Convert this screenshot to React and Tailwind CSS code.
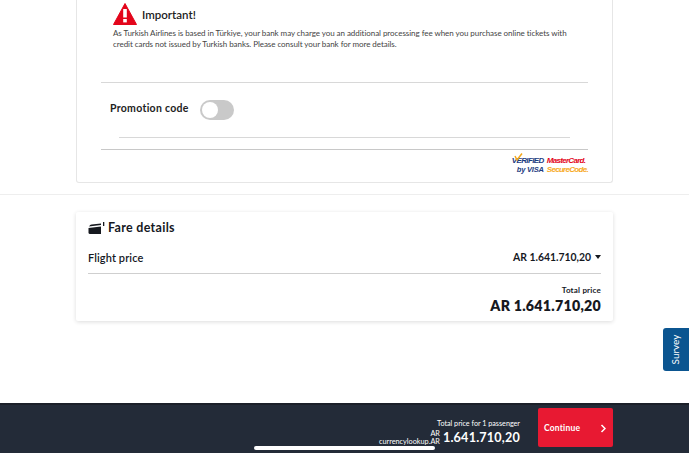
function WarningIcon() {
  return (
    <svg width="24" height="22" viewBox="0 0 24 22">
      <path d="M12 0.5 L23.5 21.5 L0.5 21.5 Z" fill="#e3051b" stroke="#e3051b" strokeLinejoin="round" />
      <rect x="10.2" y="6" width="3.6" height="8.5" fill="#fff" />
      <rect x="10.2" y="16" width="3.6" height="3.4" fill="#fff" />
    </svg>
  );
}

function CardIcon() {
  return (
    <svg width="17" height="13" viewBox="0 0 17 13">
      <path d="M1.5 4 Q1.5 2.6 3.5 2.4 L13 1.5 L13 3 L0.8 4.6 Z" fill="#16191f" />
      <path d="M0.5 6 L13 4.4 L13 12 L2 12 Q0.5 12 0.5 10.5 Z" fill="#16191f" />
      <rect x="15" y="0" width="1.3" height="4" fill="#16191f" />
    </svg>
  );
}

function SecureLogos() {
  return (
    <div className="flex items-center justify-end gap-[3px] h-[20px] font-['Liberation_Sans',sans-serif] italic font-bold">
      <div className="relative flex flex-col items-end leading-[9px] text-[#1d3c7f]">
        <svg className="absolute left-[2px] top-[-3px]" width="9" height="8" viewBox="0 0 9 8">
          <path d="M1 3 L3 7 L8 0.5" fill="none" stroke="#f4a81d" strokeWidth="1.5" />
        </svg>
        <span className="text-[8px] tracking-[-0.6px]">VERIFIED</span>
        <span className="text-[7.5px] tracking-[-0.2px]">by VISA</span>
      </div>
      <div className="flex flex-col leading-[9px] text-[8px] tracking-[-0.7px]">
        <span className="text-[#e3051b]">MasterCard.</span>
        <span className="text-[#f7a81b]">SecureCode.</span>
      </div>
    </div>
  );
}

export default function App() {
  return (
    <div className="relative flex flex-col h-[453px] overflow-hidden bg-white text-[#16191f] font-['Lato',sans-serif]">
      {/* Payment card */}
      <div className="border-b border-[#eeeeee] pb-[11px]">
        <div className="ml-[76px] w-[537px] h-[183px] border border-t-0 border-[#e6e6e6] rounded-b-[3px] px-[24px] flex flex-col">
          <div className="ml-[12px] pt-[3px]">
            <div className="flex items-center gap-[5px]">
              <WarningIcon />
              <span className="mt-[2px] text-[11.5px] font-semibold text-[#222]">Important!</span>
            </div>
            <p className="mt-[3px] text-[8px] tracking-[-0.05px] leading-[11px] text-[#444] whitespace-nowrap">
              As Turkish Airlines is based in Türkiye, your bank may charge you an additional processing fee when you purchase online tickets with
              <br />
              credit cards not issued by Turkish banks. Please consult your bank for more details.
            </p>
          </div>
          <div className="mt-[32px] border-t border-[#d8d8d8]" />
          <div className="mt-[17px] ml-[9px] flex items-center h-[20px]">
            <span className="mb-[2px] text-[10.5px] font-bold tracking-[0.3px] w-[90px] text-[#222]">Promotion code</span>
            <span className="flex items-center w-[34px] h-[20px] rounded-full bg-[#c9c9c9] pl-[2px]">
              <span className="w-[16px] h-[16px] rounded-full bg-white" />
            </span>
          </div>
          <div className="mt-[17px] mx-[18px] border-t border-[#d8d8d8]" />
          <div className="mt-[11px] border-t border-[#c8c8c8]" />
          <div className="mt-[5px]">
            <SecureLogos />
          </div>
        </div>
      </div>

      {/* Fare details */}
      <div className="mt-[17px] ml-[76px] w-[537px] h-[109px] rounded-[2px] bg-white shadow-[0_1px_4px_rgba(0,0,0,0.14)] px-[12px]">
        <div className="flex items-center gap-[3px] pt-[3px] h-[30px]">
          <CardIcon />
          <span className="text-[12.5px] font-bold tracking-[0.3px]">Fare details</span>
        </div>
        <div className="flex items-center justify-between h-[32px] border-b border-[#cfcfcf] pt-[1px]">
          <span className="text-[11px] font-semibold tracking-[0.1px]">Flight price</span>
          <span className="flex items-center gap-[4px] text-[10.4px] font-bold">
            AR 1.641.710,20
            <span className="mb-[2px] w-0 h-0 border-x-[3.5px] border-x-transparent border-t-[4px] border-t-[#16191f]" />
          </span>
        </div>
        <div className="flex flex-col items-end pt-[11px]">
          <span className="text-[8px] leading-[11px] font-bold tracking-[0.2px]">Total price</span>
          <span className="text-[14.2px] leading-[19px] font-extrabold tracking-[0.25px]">AR 1.641.710,20</span>
        </div>
      </div>

      {/* Footer */}
      <div className="relative mt-auto h-[50px] bg-[#232b38] border-t-[2px] border-[#1b2029] flex items-start justify-end pr-[76px] pt-[3px]">
        <div className="flex flex-col items-end text-white mr-[18px] mt-[11px]">
          <span className="text-[7.2px] leading-[10px]">Total price for 1 passenger</span>
          <div className="flex items-center gap-[3px]">
            <span className="text-[7.3px] leading-[8px] text-right">AR<br />currencylookup.AR</span>
            <span className="text-[12.6px] leading-[17px] font-bold tracking-[0.2px]">1.641.710,20</span>
          </div>
        </div>
        <button className="w-[75px] h-[39px] rounded-[2px] bg-[#e81932] text-white flex items-center justify-between pl-[6px] pr-[7px] pt-[1px] text-[8.5px] font-bold tracking-[0.2px]">
          Continue
          <svg width="6" height="9" viewBox="0 0 6 9">
            <path d="M1.5 1 L5 4.5 L1.5 8" fill="none" stroke="#fff" strokeWidth="1.5" />
          </svg>
        </button>
        <span className="absolute left-[254px] top-[41px] w-[181px] h-[4px] rounded-full bg-white" />
      </div>

      {/* Survey tab */}
      <div className="absolute left-[663px] top-[328px] w-[26px] h-[43px] rounded-l-[3px] bg-[#0b5590] flex items-center justify-center">
        <span className="text-[10px] text-white -rotate-90">Survey</span>
      </div>
    </div>
  );
}
